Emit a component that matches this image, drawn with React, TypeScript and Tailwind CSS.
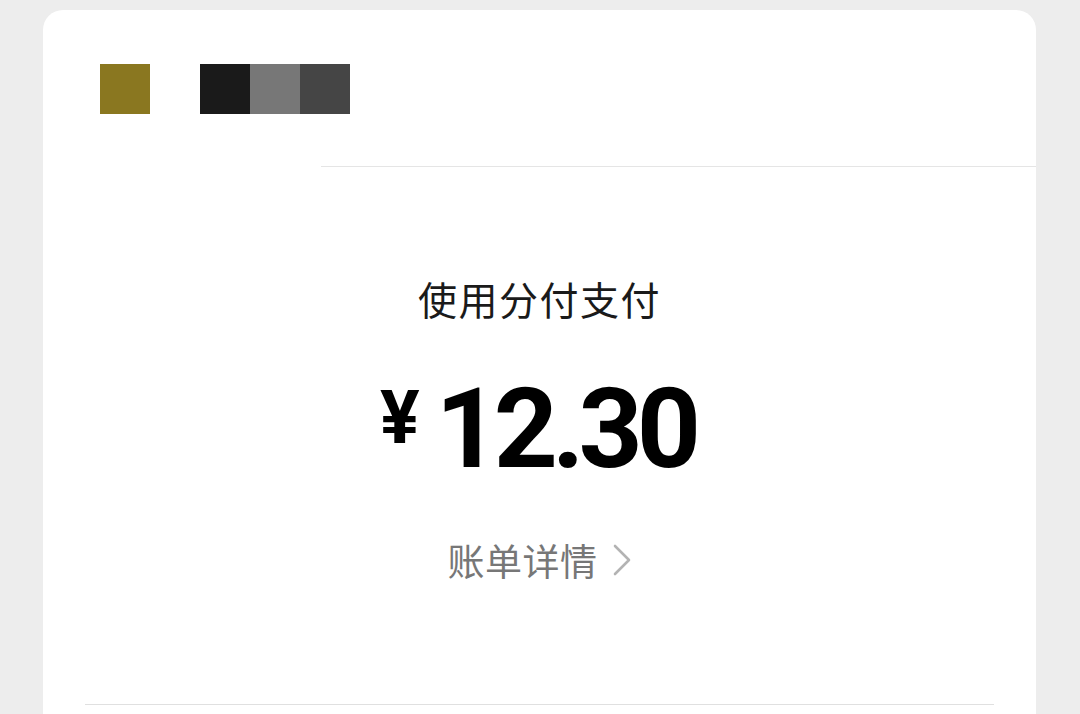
const cjk = { fontFamily: '"Noto Sans CJK SC", "Noto Sans", sans-serif' };
const num = { fontFamily: 'Roboto, "Noto Sans", sans-serif' };

export default function App() {
  return (
    <div className="w-[1080px] h-[714px] overflow-hidden bg-[#ededed] pt-[10px] pl-[43px]">
      <div className="w-[993px] h-[760px] bg-white rounded-t-[20px] flex flex-col">
        {/* header blocks */}
        <div className="h-[156px] pt-[54px] pl-[57px] flex items-start">
          <div className="w-[50px] h-[50px] bg-[#8a7720]" />
          <div className="ml-[50px] flex">
            <div className="w-[50px] h-[50px] bg-[#1a1a1a]" />
            <div className="w-[50px] h-[50px] bg-[#777777]" />
            <div className="w-[50px] h-[50px] bg-[#454545]" />
          </div>
        </div>
        <div className="ml-[278px] h-px bg-[#e5e5e5]" />

        {/* amount */}
        <div className="flex flex-col items-center pt-[106px]">
          <div className="text-[39px] leading-[50px] text-[#1a1a1a] tracking-[1.5px]" style={cjk}>
            使用分付支付
          </div>
          <div className="mt-[50px] pr-[10px] flex items-start text-black font-bold" style={num}>
            <span className="text-[74px] leading-none mt-[8px] mr-[16px]">¥</span>
            <span className="text-[112px] leading-none tracking-[-6px] mr-[-6px]">12.30</span>
          </div>
          <div className="mt-[50px] flex items-center text-[#777777]" style={cjk}>
            <span className="text-[37px] leading-[50px] tracking-[0.5px]">账单详情</span>
            <svg width="20" height="32" viewBox="0 0 20 32" className="ml-[14px]" fill="none">
              <path d="M3 2 L17 16 L3 30" stroke="#b3b3b3" strokeWidth="2.6" strokeLinecap="round" strokeLinejoin="round" />
            </svg>
          </div>
        </div>

        <div className="mt-[119px] mx-[42px] h-px bg-[#e0e0e0]" />
      </div>
    </div>
  );
}
